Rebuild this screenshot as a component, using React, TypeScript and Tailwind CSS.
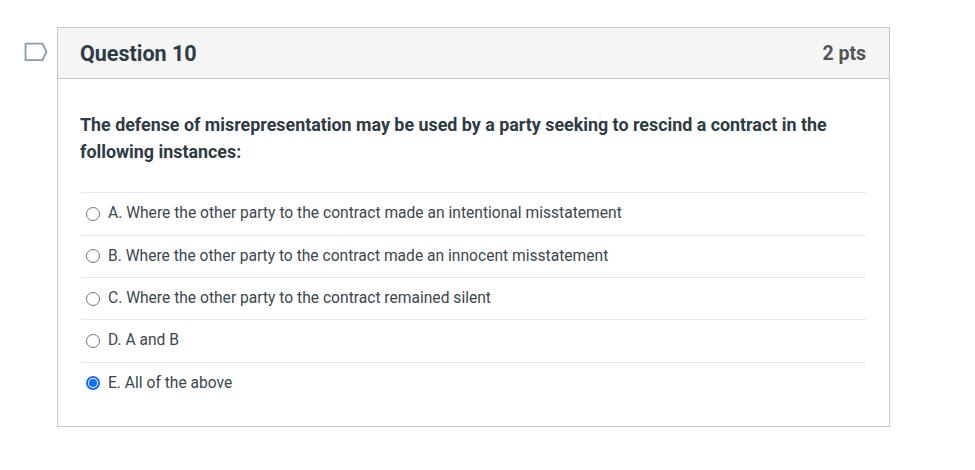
const options = [
  "A. Where the other party to the contract made an intentional misstatement",
  "B. Where the other party to the contract made an innocent misstatement",
  "C. Where the other party to the contract remained silent",
  "D. A and B",
  "E. All of the above",
];

export default function App() {
  return (
    <div className="h-[470px] w-[975px] overflow-hidden bg-white pt-[27px] pl-[24px] font-['Roboto',sans-serif] text-[#2d3b45]">
      <div className="flex items-start">
        <svg width="24" height="20" viewBox="0 0 24 20" fill="none" className="mt-[15px] w-[24px] shrink-0">
          <path d="M1.5 1.5H18.5L22.5 9.75L18.5 18H1.5Z" stroke="#7f9fb5" strokeWidth="1.75" />
        </svg>
        <div className="ml-[9px] h-[400px] w-[833px] border border-[#c8c8c8]">
          <div className="flex h-[51px] items-center justify-between border-b border-[#c8c8c8] bg-[#f5f5f5] pt-[2px] pr-[23px] pl-[22px]">
            <h2 className="text-[21.5px] font-bold">Question 10</h2>
            <span className="text-[19.5px] font-bold text-[#4f5558]">2 pts</span>
          </div>
          <div className="pt-[32px] pr-[23px] pl-[22px]">
            <p className="text-[17.88px] leading-[27px] font-bold">
              The defense of misrepresentation may be used by a party seeking to rescind a contract in the following instances:
            </p>
            <div className="mt-[27.4px] ml-[1px]">
              {options.map((option, index) => (
                <label key={option} className="flex h-[42.3px] items-center border-t border-[#e8e8e8] pl-[5px] text-[15.62px] text-[#3a4750]">
                  {index === 4 ? (
                    <span className="flex size-[14px] items-center justify-center rounded-full border-2 border-[#0f6fff]">
                      <span className="size-[8px] rounded-full bg-[#0f6fff]" />
                    </span>
                  ) : (
                    <span className="size-[14px] rounded-full border border-[#767676]" />
                  )}
                  <span className="ml-[8px]">{option}</span>
                </label>
              ))}
            </div>
          </div>
        </div>
      </div>
    </div>
  );
}
